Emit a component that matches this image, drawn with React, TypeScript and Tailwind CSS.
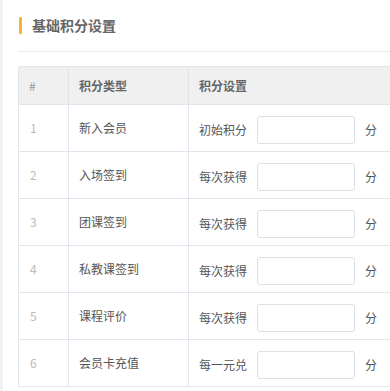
const rows = [
  { no: 1, type: "新入会员", label: "初始积分" },
  { no: 2, type: "入场签到", label: "每次获得" },
  { no: 3, type: "团课签到", label: "每次获得" },
  { no: 4, type: "私教课签到", label: "每次获得" },
  { no: 5, type: "课程评价", label: "每次获得" },
  { no: 6, type: "会员卡充值", label: "每一元兑" },
];

export default function App() {
  return (
    <div
      className="flex h-[391px] w-[390px] overflow-hidden bg-white"
      style={{ fontFamily: '"Noto Sans CJK SC", "Noto Sans", sans-serif' }}
    >
      <div className="w-[3px] shrink-0 bg-[#f0f2f5]" />
      <div className="min-w-0 flex-1 pl-[15px]">
        <div className="flex h-[52px] items-center border-b border-[#e8eaee]">
          <span className="ml-[1px] h-[17px] w-[3px] rounded-[1px] bg-[#f7b52c]" />
          <h2 className="ml-[10px] text-[14px] font-bold text-[#666]">基础积分设置</h2>
        </div>
        <div className="mt-[14px] w-[520px] border-l border-t border-[#e1e5ec] text-[12px] text-[#555]">
          <div className="flex h-[38px] border-b border-[#e1e5ec] bg-[#f0f0f0] font-bold text-[#666]">
            <div className="flex w-[50px] items-center border-r border-[#e1e5ec] pl-[10px] font-normal text-[#999]">#</div>
            <div className="flex w-[120px] items-center border-r border-[#e1e5ec] pl-[10px]">积分类型</div>
            <div className="flex flex-1 items-center pl-[10px]">积分设置</div>
          </div>
          {rows.map((r) => (
            <div key={r.no} className="flex h-[47px] border-b border-[#e1e5ec]">
              <div className="flex w-[50px] items-center border-r border-[#e1e5ec] pl-[11px] text-[#bbb]">{r.no}</div>
              <div className="flex w-[120px] items-center border-r border-[#e1e5ec] pl-[10px]">{r.type}</div>
              <div className="flex flex-1 items-center pl-[10px] pt-[3px]">
                <span>{r.label}</span>
                <input className="ml-[10px] h-[28px] w-[98px] rounded-[3px] border border-[#dcdfe6] outline-none" />
                <span className="ml-[10px]">分</span>
              </div>
            </div>
          ))}
        </div>
      </div>
    </div>
  );
}
